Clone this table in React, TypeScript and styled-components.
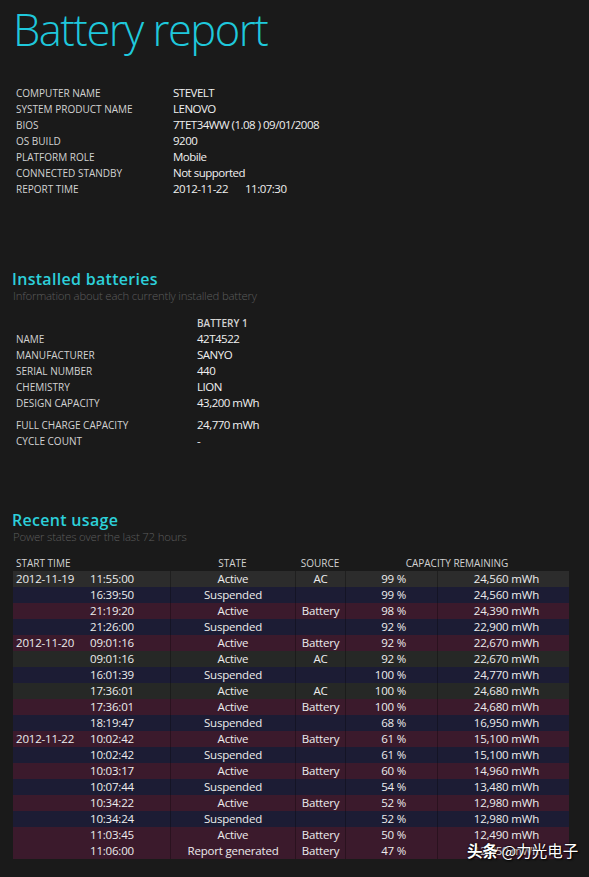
import React from "react";
import styled, { createGlobalStyle } from "styled-components";

const Global = createGlobalStyle`
  html, body { margin: 0; padding: 0; background: #1a1a1a; }
  body { font-family: "Open Sans", "Noto Sans", sans-serif; color: #eaeaea; }
`;

const Page = styled.div`
  position: relative;
  width: 589px;
  height: 877px;
  box-sizing: border-box;
  padding: 0 0 0 13px;
  background: #1a1a1a;
  overflow: hidden;
`;

const Title = styled.h1`
  margin: 0;
  font-family: "Open Sans", sans-serif;
  font-weight: 300;
  font-size: 43.5px;
  line-height: 60px;
  color: #1fc8dc;
  letter-spacing: -1.5px;
`;

const InfoTable = styled.div<{ $label: number; $top: number }>`
  display: grid;
  grid-template-columns: ${(p) => p.$label}px 1fr;
  margin-top: ${(p) => p.$top}px;
  padding-left: 3px;
`;

const Label = styled.div<{ $gap?: number; $strong?: boolean }>`
  font-size: 10px;
  line-height: 16px;
  height: 16px;
  color: #d2d2d2;
  font-weight: ${(p) => (p.$strong ? 600 : 400)};
  text-transform: uppercase;
  white-space: nowrap;
  margin-top: ${(p) => p.$gap || 0}px;
`;

const Value = styled.div<{ $gap?: number }>`
  font-size: 11.5px;
  line-height: 16px;
  height: 16px;
  color: #f0f0f0;
  white-space: pre;
  letter-spacing: -0.5px;
  margin-top: ${(p) => p.$gap || 0}px;
`;

const TimePart = styled.span`
  margin-left: 17px;
`;

const Heading = styled.h2<{ $top: number }>`
  margin: ${(p) => p.$top}px 0 0 -1px;
  font-size: 16px;
  font-weight: 600;
  line-height: 18px;
  color: #2dd0da;
  letter-spacing: 0.3px;
`;

const Sub = styled.div`
  font-size: 11.4px;
  font-weight: 300;
  line-height: 16px;
  color: #5c5c5c;
  letter-spacing: -0.2px;
`;

const Usage = styled.div`
  display: grid;
  grid-template-columns: 75px 82px 125px 50px 92px 132px;
  width: 556px;
  margin-top: 10px;
`;

const Th = styled.div<{ $align?: string; $span?: number }>`
  font-size: 10px;
  line-height: 16px;
  height: 16px;
  color: #d2d2d2;
  text-transform: uppercase;
  text-align: ${(p) => p.$align || "center"};
  padding-left: ${(p) => (p.$align === "left" ? 3 : 0)}px;
  grid-column: span ${(p) => p.$span || 1};
  white-space: nowrap;
`;

const rowBg: Record<string, string> = {
  ac: "#262826",
  acFirst: "#2c2c2c",
  susp: "#1c1c34",
  batt: "#3b1a2c",
};

const Td = styled.div<{ $kind: string; $align: string; $sep?: boolean; $pad?: number }>`
  background: ${(p) => rowBg[p.$kind]};
  font-size: 11.5px;
  line-height: 16px;
  height: 16px;
  color: #ececec;
  letter-spacing: -0.2px;
  text-align: ${(p) => p.$align};
  padding: 0 ${(p) => (p.$align === "right" ? p.$pad || 30 : 0)}px 0 ${(p) =>
    p.$align === "left" ? p.$pad || 3 : 0}px;
  border-left: ${(p) => (p.$sep ? "1px solid rgba(0,0,0,0.28)" : "none")};
  box-sizing: border-box;
  white-space: nowrap;
`;

const Watermark = styled.div`
  position: absolute;
  left: 467px;
  top: 840px;
  font-family: "Noto Sans CJK SC", sans-serif;
  font-size: 15.5px;
  line-height: 20px;
  color: #ffffff;
  text-shadow: 0 0 2px #000, 1px 1px 2px #000;
  white-space: nowrap;
  & b { font-weight: 700; }
`;

const info: [string, React.ReactNode][] = [
  ["Computer name", "STEVELT"],
  ["System product name", "LENOVO"],
  ["BIOS", "7TET34WW (1.08 ) 09/01/2008"],
  ["OS build", "9200"],
  ["Platform role", "Mobile"],
  ["Connected standby", "Not supported"],
  [
    "Report time",
    <>
      2012-11-22<TimePart>11:07:30</TimePart>
    </>,
  ],
];

const battery: [string, string, number?][] = [
  ["Name", "42T4522"],
  ["Manufacturer", "SANYO"],
  ["Serial number", "440"],
  ["Chemistry", "LION"],
  ["Design capacity", "43,200 mWh"],
  ["Full charge capacity", "24,770 mWh", 6],
  ["Cycle count", "-"],
];

type Row = [string, string, string, string, string, string];
const rows: Row[] = [
  ["2012-11-19", "11:55:00", "Active", "AC", "99 %", "24,560 mWh"],
  ["", "16:39:50", "Suspended", "", "99 %", "24,560 mWh"],
  ["", "21:19:20", "Active", "Battery", "98 %", "24,390 mWh"],
  ["", "21:26:00", "Suspended", "", "92 %", "22,900 mWh"],
  ["2012-11-20", "09:01:16", "Active", "Battery", "92 %", "22,670 mWh"],
  ["", "09:01:16", "Active", "AC", "92 %", "22,670 mWh"],
  ["", "16:01:39", "Suspended", "", "100 %", "24,770 mWh"],
  ["", "17:36:01", "Active", "AC", "100 %", "24,680 mWh"],
  ["", "17:36:01", "Active", "Battery", "100 %", "24,680 mWh"],
  ["", "18:19:47", "Suspended", "", "68 %", "16,950 mWh"],
  ["2012-11-22", "10:02:42", "Active", "Battery", "61 %", "15,100 mWh"],
  ["", "10:02:42", "Suspended", "", "61 %", "15,100 mWh"],
  ["", "10:03:17", "Active", "Battery", "60 %", "14,960 mWh"],
  ["", "10:07:44", "Suspended", "", "54 %", "13,480 mWh"],
  ["", "10:34:22", "Active", "Battery", "52 %", "12,980 mWh"],
  ["", "10:34:24", "Suspended", "", "52 %", "12,980 mWh"],
  ["", "11:03:45", "Active", "Battery", "50 %", "12,490 mWh"],
  ["", "11:06:00", "Report generated", "Battery", "47 %", "12,750 mWh"],
];

function kindOf(r: Row, i: number) {
  if (r[3] === "Battery") return "batt";
  if (r[3] === "AC") return i === 0 ? "acFirst" : "ac";
  return "susp";
}

export default function App() {
  return (
    <Page>
      <Global />
      <Title>Battery report</Title>
      <InfoTable $label={157} $top={25}>
        {info.map(([l, v]) => (
          <React.Fragment key={l}>
            <Label>{l}</Label>
            <Value>{v}</Value>
          </React.Fragment>
        ))}
      </InfoTable>

      <Heading $top={73}>Installed batteries</Heading>
      <Sub>Information about each currently installed battery</Sub>
      <InfoTable $label={181} $top={11}>
        <Label />
        <Label $strong>Battery 1</Label>
        {battery.map(([l, v, g]) => (
          <React.Fragment key={l}>
            <Label $gap={g}>{l}</Label>
            <Value $gap={g}>{v}</Value>
          </React.Fragment>
        ))}
      </InfoTable>

      <Heading $top={62}>Recent usage</Heading>
      <Sub>Power states over the last 72 hours</Sub>
      <Usage>
        <Th $align="left" $span={2}>Start time</Th>
        <Th>State</Th>
        <Th>Source</Th>
        <Th $span={2}>Capacity remaining</Th>
        {rows.map((r, i) => {
          const k = kindOf(r, i);
          return (
            <React.Fragment key={i}>
              <Td $kind={k} $align="left">{r[0]}</Td>
              <Td $kind={k} $align="left" $pad={2}>{r[1]}</Td>
              <Td $kind={k} $align="center" $sep>{r[2]}</Td>
              <Td $kind={k} $align="center" $sep>{r[3]}</Td>
              <Td $kind={k} $align="right" $sep $pad={31}>{r[4]}</Td>
              <Td $kind={k} $align="right" $sep $pad={30}>{r[5]}</Td>
            </React.Fragment>
          );
        })}
      </Usage>
      <Watermark>
        <b>头条</b> @力光电子
      </Watermark>
    </Page>
  );
}
